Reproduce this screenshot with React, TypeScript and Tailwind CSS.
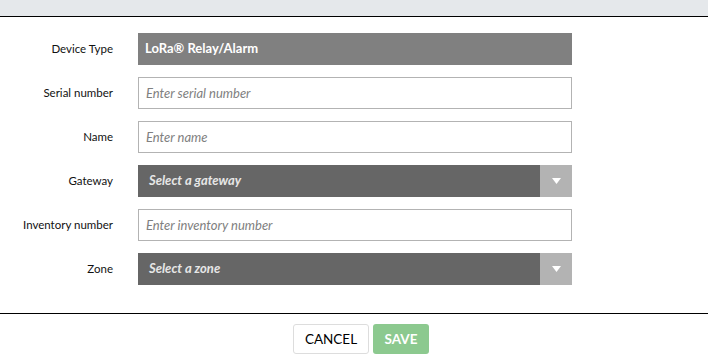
import React from "react";

const font = { fontFamily: "Lato, 'Open Sans', sans-serif" };

function Label({ children }: { children: React.ReactNode }) {
  return <div className="w-[113px] shrink-0 text-right text-[11.5px] text-[#111]">{children}</div>;
}

function TextInput({ placeholder }: { placeholder: string }) {
  return (
    <input
      placeholder={placeholder}
      className="h-8 w-[434px] border border-[#b3b3b3] bg-white px-[7px] text-[13px] italic text-[#333] outline-none placeholder:text-[#808080]"
      style={font}
    />
  );
}

function Select({ placeholder }: { placeholder: string }) {
  return (
    <div className="flex h-8 w-[434px] bg-[#666666]">
      <div className="flex flex-1 items-center px-[11px] text-[13px] font-bold italic text-[#e6e6e6]">
        {placeholder}
      </div>
      <div className="flex w-8 items-center justify-center bg-[#b3b3b3]">
        <svg width="9" height="6" viewBox="0 0 9 6">
          <path d="M0 0h9L4.5 6z" fill="#fff" />
        </svg>
      </div>
    </div>
  );
}

export default function App() {
  return (
    <div className="h-[361px] w-[708px] bg-white" style={font}>
      <div className="h-[17px] border-b border-black bg-[#e5e8eb]" />
      <div className="flex flex-col gap-3 pt-[16px] pb-[28px]">
        <div className="flex items-center gap-[25px]">
          <Label>Device Type</Label>
          <div className="flex h-8 w-[434px] items-center bg-[#808080] px-[7px] text-[13px] font-bold text-white">
            LoRa® Relay/Alarm
          </div>
        </div>
        <div className="flex items-center gap-[25px]">
          <Label>Serial number</Label>
          <TextInput placeholder="Enter serial number" />
        </div>
        <div className="flex items-center gap-[25px]">
          <Label>Name</Label>
          <TextInput placeholder="Enter name" />
        </div>
        <div className="flex items-center gap-[25px]">
          <Label>Gateway</Label>
          <Select placeholder="Select a gateway" />
        </div>
        <div className="flex items-center gap-[25px]">
          <Label>Inventory number</Label>
          <TextInput placeholder="Enter inventory number" />
        </div>
        <div className="flex items-center gap-[25px]">
          <Label>Zone</Label>
          <Select placeholder="Select a zone" />
        </div>
      </div>
      <div className="flex justify-center gap-1 border-t border-black pt-[10px] pl-[14px]">
        <button className="h-[30px] w-[76px] rounded-[3px] border border-[#ddd] bg-white text-[13.5px] text-black">
          CANCEL
        </button>
        <button className="h-[30px] w-[56px] rounded-[3px] bg-[#8cc98f] text-[13.5px] font-bold text-white">
          SAVE
        </button>
      </div>
    </div>
  );
}
